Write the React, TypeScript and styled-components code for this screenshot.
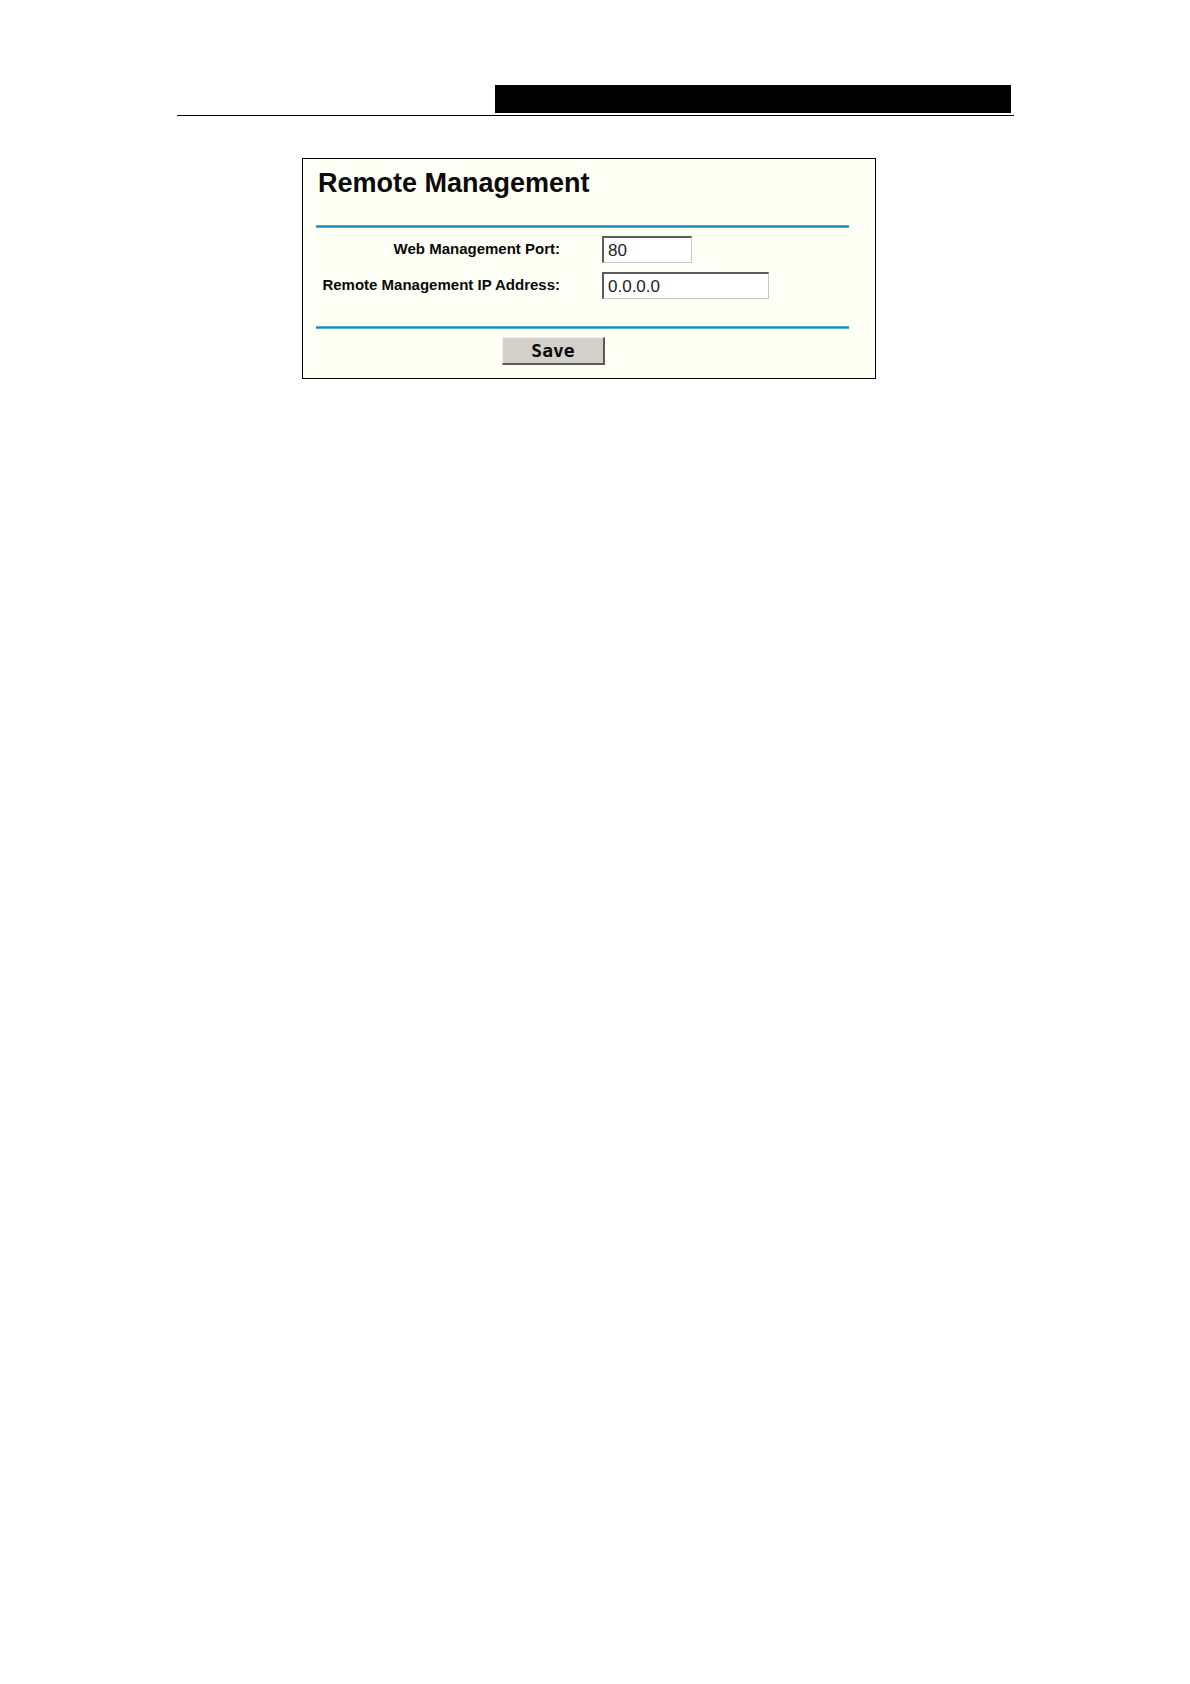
import React from "react";
import styled, { createGlobalStyle } from "styled-components";

const GlobalStyle = createGlobalStyle`
  *, *::before, *::after { box-sizing: border-box; }
  body {
    margin: 0;
    background: #ffffff;
    color: #0a0a0a;
    font-family: "Liberation Sans", Arial, sans-serif;
  }
`;

const Page = styled.div`
  padding: 85px 176px 64px 177px;
`;

const PageHeader = styled.header`
  display: flex;
  padding: 0 3px 2px 318px;
  border-bottom: 1px solid #000000;
`;

const HeaderBand = styled.div`
  flex: 1;
  height: 28px;
  background: #000000;
`;

const Main = styled.main`
  display: flex;
  justify-content: center;
  padding: 42px 13px 0 0;
`;

const Panel = styled.form`
  flex: 0 1 574px;
  display: flex;
  flex-direction: column;
  padding: 8px 26px 13px 13px;
  border: 1px solid #000000;
  background: #fefff5;
`;

const Title = styled.h1`
  margin: 0 0 26px;
  padding-left: 2px;
  font-size: 27px;
  line-height: 32px;
  font-weight: bold;
`;

const Divider = styled.hr`
  width: 100%;
  height: 3px;
  margin: 0;
  border: 1px solid #4fb0d4;
  border-width: 1px 0;
  background: #1b86b0;
`;

const Fields = styled.div`
  display: grid;
  grid-template-columns: 244px 1fr;
  column-gap: 42px;
  row-gap: 9px;
  padding: 8px 0 27px;
`;

const Label = styled.label`
  font-size: 15px;
  line-height: 25px;
  font-weight: bold;
  text-align: right;
  white-space: nowrap;
`;

const TextInput = styled.input<{ $width: number }>`
  width: ${({ $width }) => $width}px;
  height: 27px;
  padding: 1px 4px 0;
  border: 2px solid;
  border-width: 2px 1px 1px 2px;
  border-color: #5c5c5a #c8c8c4 #c8c8c4 #5c5c5a;
  border-radius: 0;
  background: #ffffff;
  color: #222222;
  font-family: inherit;
  font-size: 17px;
  outline: none;
`;

const Actions = styled.div`
  display: flex;
  padding: 8px 0 0 186px;
`;

const SaveButton = styled.button`
  width: 103px;
  height: 28px;
  padding: 0;
  border: 2px solid;
  border-width: 1px 2px 2px 1px;
  border-color: #f2f2ec #5a5a58 #5a5a58 #f2f2ec;
  border-radius: 0;
  background: #d2d0c8;
  color: #0a0a0a;
  font-family: "DejaVu Sans Mono", monospace;
  font-size: 18px;
  line-height: 24px;
  font-weight: bold;
`;

export default function App() {
  return (
    <>
      <GlobalStyle />
      <Page>
        <PageHeader>
          <HeaderBand />
        </PageHeader>
        <Main>
          <Panel onSubmit={(event) => event.preventDefault()}>
            <Title>Remote Management</Title>
            <Divider />
            <Fields>
              <Label htmlFor="port">Web Management Port:</Label>
              <TextInput id="port" type="text" defaultValue="80" $width={90} />
              <Label htmlFor="address">Remote Management IP Address:</Label>
              <TextInput id="address" type="text" defaultValue="0.0.0.0" $width={167} />
            </Fields>
            <Divider />
            <Actions>
              <SaveButton type="submit">Save</SaveButton>
            </Actions>
          </Panel>
        </Main>
      </Page>
    </>
  );
}
